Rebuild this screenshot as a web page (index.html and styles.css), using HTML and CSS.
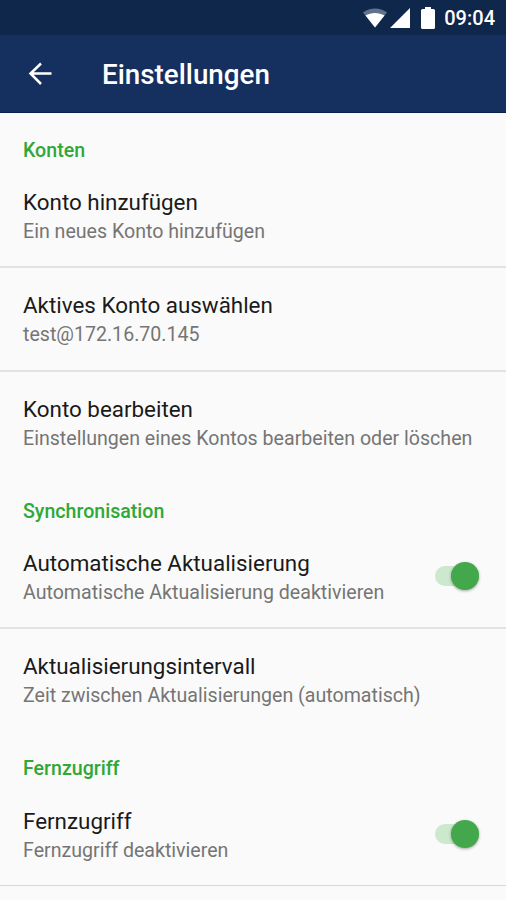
FILE: index.html
```
<!DOCTYPE html>
<html lang="de">
<head>
  <meta charset="UTF-8">
  <meta name="viewport" content="width=device-width, initial-scale=1.0">
  <title>Einstellungen</title>
  <link rel="stylesheet" href="styles.css">
</head>
<body>
  <div class="status-bar">
    <svg class="icon-wifi" width="24" height="20" viewBox="0 0 24 20"><path d="M0 4.500C7 -1 17 -1 24 4.500L12 19.500Z" fill="#fff" fill-opacity=".35"/><path d="M2.500 7.500C8 4 16 4 21.500 7.500L12 19.500Z" fill="#fff"/></svg>
    <svg class="icon-signal" width="20" height="20" viewBox="0 0 20 20"><path d="M20 0V20H0Z" fill="#fff"/></svg>
    <svg class="icon-battery" width="14" height="22" viewBox="0 0 14 22"><path d="M4 0H10V2H12.500Q14 2 14 3.500V20.500Q14 22 12.500 22H1.500Q0 22 0 20.500V3.500Q0 2 1.500 2H4Z" fill="#fff"/></svg>
    <span class="clock">09:04</span>
  </div>

  <header class="toolbar">
    <svg class="icon-back" width="24" height="24" viewBox="0 0 24 24" fill="none" stroke="#fff" stroke-width="2.500"><path d="M23.500 11.500H3M13 1.500L2.500 11.500L13 22"/></svg>
    <h1 class="toolbar-title">Einstellungen</h1>
  </header>

  <main>
    <section class="group">
      <h2 class="group-title">Konten</h2>
      <div class="item">
        <div class="item-title">Konto hinzufügen</div>
        <div class="item-summary">Ein neues Konto hinzufügen</div>
      </div>
      <div class="item">
        <div class="item-title">Aktives Konto auswählen</div>
        <div class="item-summary">test@172.16.70.145</div>
      </div>
      <div class="item">
        <div class="item-title">Konto bearbeiten</div>
        <div class="item-summary">Einstellungen eines Kontos bearbeiten oder löschen</div>
      </div>
    </section>

    <section class="group">
      <h2 class="group-title">Synchronisation</h2>
      <div class="item item-switch">
        <div class="item-text">
          <div class="item-title">Automatische Aktualisierung</div>
          <div class="item-summary">Automatische Aktualisierung deaktivieren</div>
        </div>
        <div class="switch"></div>
      </div>
      <div class="item">
        <div class="item-title">Aktualisierungsintervall</div>
        <div class="item-summary">Zeit zwischen Aktualisierungen (automatisch)</div>
      </div>
    </section>

    <section class="group group-last">
      <h2 class="group-title">Fernzugriff</h2>
      <div class="item item-switch">
        <div class="item-text">
          <div class="item-title">Fernzugriff</div>
          <div class="item-summary">Fernzugriff deaktivieren</div>
        </div>
        <div class="switch"></div>
      </div>
    </section>
  </main>
</body>
</html>
```
FILE: styles.css
```
* {
  box-sizing: border-box;
}

body {
  margin: 0;
  background: #fafafa;
  font-family: Roboto, "Liberation Sans", sans-serif;
}

.status-bar {
  display: flex;
  align-items: center;
  justify-content: flex-end;
  height: 35px;
  padding-right: 11px;
  background: #0f274b;
  color: #fff;
}

.icon-signal {
  margin-left: 3px;
}

.icon-battery {
  margin: 0 9px 0 11px;
}

.clock {
  font-size: 20px;
  font-weight: 500;
}

.toolbar {
  display: flex;
  align-items: center;
  height: 78px;
  padding-left: 28px;
  border-bottom: 1px solid #0c1f4c;
  background: #15305f;
  color: #fff;
}

.toolbar-title {
  margin: 1px 0 0 50px;
  font-size: 27.8px;
  font-weight: 500;
}

.group-title {
  height: 51px;
  margin: 0;
  padding: 27px 23px 0;
  color: #2fa836;
  font-size: 19.6px;
  font-weight: 500;
  line-height: 22px;
}

.group-last .group-title {
  height: 52px;
}

.item {
  height: 102px;
  padding: 24px 23px 0;
}

.item + .item {
  height: 104px;
  padding-top: 23px;
  border-top: 2px solid #e2e2e2;
}

.group-last {
  border-bottom: 1px solid #d6d6d6;
}

.item-title {
  color: #1a1a1a;
  font-size: 22.4px;
  line-height: 28px;
}

.item-summary {
  margin-top: 1px;
  color: #757575;
  font-size: 19.6px;
  line-height: 29px;
}

.item-switch {
  display: flex;
  justify-content: space-between;
}

.switch {
  position: relative;
  width: 44px;
  height: 20px;
  margin: 17px 4px 0 0;
  border-radius: 10px;
  background: #cce8cd;
}

.switch::after {
  content: "";
  position: absolute;
  top: -4px;
  right: 0;
  width: 28px;
  height: 28px;
  border-radius: 50%;
  background: #43a84b;
  box-shadow: 0 1px 3px rgba(0, 0, 0, 0.35);
}
```
